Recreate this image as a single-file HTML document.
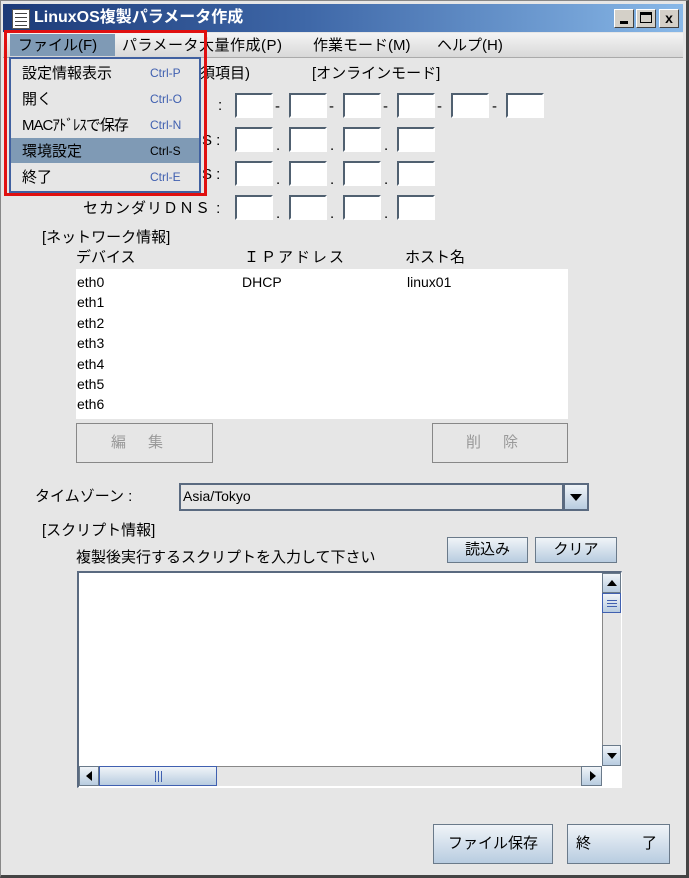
<!DOCTYPE html>
<html><head><meta charset="utf-8"><style>
*{margin:0;padding:0;box-sizing:border-box}
body{width:689px;height:878px;background:#fff;position:relative;overflow:hidden;font-family:"Liberation Sans","Noto Sans CJK JP",sans-serif;font-size:15px;color:#000}
.a{position:absolute;white-space:nowrap;line-height:1}
.win{position:absolute;left:0;top:0;width:689px;height:878px;background:#e6e6e6;border:1px solid #888;border-right:3px solid #444;border-bottom:3px solid #444}
.title{position:absolute;left:3px;top:4px;width:680px;height:28px;background:linear-gradient(90deg,#1c3a78 0%,#3f68a8 45%,#88b8e8 100%)}
.wb{position:absolute;top:5px;width:20px;height:19px;background:#d4d0c8;border:1px solid;border-color:#fff #404040 #404040 #fff}
.box{position:absolute;width:38px;height:25px;background:#fff;border:2px solid #fff;border-top-color:#506070;border-left-color:#506070}
.btn{position:absolute;border:1px solid #6a7a8a;background:linear-gradient(#f0f4f8,#b8cce0);text-align:center}
.dis{position:absolute;border:1px solid #888;background:#e6e6e6;color:#999}
</style></head><body>
<div class="win"></div>
<div class="title"></div>
<div class="a" style="left:12px;top:9px;width:18px;height:20px;background:#fff;border:1px solid #555"><div style="margin:3px 2px;height:1px;background:#444;box-shadow:0 4px #444,0 8px #444,0 12px #444"></div></div>
<div class="a" style="left:34px;top:10px;color:#fff;font-weight:bold;font-size:16px">LinuxOS複製パラメータ作成</div>
<div class="wb" style="left:614px;top:9px"><div style="position:absolute;left:5px;top:11px;width:8px;height:3px;background:#000"></div></div>
<div class="wb" style="left:636px;top:9px"><div style="position:absolute;left:3px;top:2px;width:12px;height:11px;border:1px solid #000;border-top-width:3px"></div></div>
<div class="wb" style="left:659px;top:9px;font-weight:bold;font-size:14px;text-align:center;line-height:16px">x</div>
<div class="a" style="left:3px;top:33px;width:680px;height:25px;background:linear-gradient(#f4f4f4,#d8d8d8);border-bottom:1px solid #aaa"></div>
<div class="a" style="left:10px;top:34px;width:105px;height:22px;background:#7f9ab5"></div>
<div class="a" style="left:18px;top:38px">ファイル(F)</div>
<div class="a" style="left:122px;top:38px;letter-spacing:0.5px">パラメータ大量作成(P)</div>
<div class="a" style="left:313px;top:38px">作業モード(M)</div>
<div class="a" style="left:437px;top:38px">ヘルプ(H)</div>

<div class="a" style="left:200px;top:66px">須項目)</div>
<div class="a" style="left:312px;top:66px">[オンラインモード]</div>

<div class="a" style="left:218px;top:98px">:</div>
<div class="box" style="left:235px;top:93px"></div><div class="a" style="left:275px;top:99px">-</div>
<div class="box" style="left:289px;top:93px"></div><div class="a" style="left:329px;top:99px">-</div>
<div class="box" style="left:343px;top:93px"></div><div class="a" style="left:383px;top:99px">-</div>
<div class="box" style="left:397px;top:93px"></div><div class="a" style="left:437px;top:99px">-</div>
<div class="box" style="left:451px;top:93px"></div><div class="a" style="left:492px;top:99px">-</div>
<div class="box" style="left:506px;top:93px"></div>

<div class="a" style="left:202px;top:133px">S :</div>
<div class="box" style="left:235px;top:127px"></div><div class="a" style="left:276px;top:138px">.</div>
<div class="box" style="left:289px;top:127px"></div><div class="a" style="left:330px;top:138px">.</div>
<div class="box" style="left:343px;top:127px"></div><div class="a" style="left:384px;top:138px">.</div>
<div class="box" style="left:397px;top:127px"></div>
<div class="a" style="left:202px;top:167px">S :</div>
<div class="box" style="left:235px;top:161px"></div><div class="a" style="left:276px;top:172px">.</div>
<div class="box" style="left:289px;top:161px"></div><div class="a" style="left:330px;top:172px">.</div>
<div class="box" style="left:343px;top:161px"></div><div class="a" style="left:384px;top:172px">.</div>
<div class="box" style="left:397px;top:161px"></div>
<div class="a" style="left:83px;top:201px;letter-spacing:1px">セカンダリＤＮＳ :</div>
<div class="box" style="left:235px;top:195px"></div><div class="a" style="left:276px;top:206px">.</div>
<div class="box" style="left:289px;top:195px"></div><div class="a" style="left:330px;top:206px">.</div>
<div class="box" style="left:343px;top:195px"></div><div class="a" style="left:384px;top:206px">.</div>
<div class="box" style="left:397px;top:195px"></div>

<div class="a" style="left:42px;top:230px">[ネットワーク情報]</div>
<div class="a" style="left:76px;top:250px">デバイス</div>
<div class="a" style="left:244px;top:250px;letter-spacing:2px">ＩＰアドレス</div>
<div class="a" style="left:405px;top:250px">ホスト名</div>
<div class="a" style="left:76px;top:269px;width:492px;height:150px;background:#fff"></div>
<div class="a" style="left:77px;top:272px;font-size:14px;line-height:20.4px">eth0<br>eth1<br>eth2<br>eth3<br>eth4<br>eth5<br>eth6</div>
<div class="a" style="left:242px;top:275px;font-size:14px">DHCP</div>
<div class="a" style="left:407px;top:275px;font-size:14px">linux01</div>
<div class="dis" style="left:76px;top:423px;width:137px;height:40px;line-height:38px;padding-left:34px;letter-spacing:22px">編集</div>
<div class="dis" style="left:432px;top:423px;width:136px;height:40px;line-height:38px;padding-left:33px;letter-spacing:22px">削除</div>

<div class="a" style="left:35px;top:489px">タイムゾーン :</div>
<div class="a" style="left:179px;top:483px;width:384px;height:28px;border:2px solid #5a6a80;background:#e6e6e6;border-right:1px solid #5a6a80"></div>
<div class="a" style="left:183px;top:489px;font-size:14px">Asia/Tokyo</div>
<div class="btn" style="left:563px;top:483px;width:26px;height:28px;border:2px solid #5a6a80"><div style="margin:9px auto 0;width:0;height:0;border-left:6px solid transparent;border-right:6px solid transparent;border-top:7px solid #000"></div></div>

<div class="a" style="left:42px;top:523px">[スクリプト情報]</div>
<div class="btn" style="left:447px;top:537px;width:81px;height:26px;line-height:24px">読込み</div>
<div class="btn" style="left:535px;top:537px;width:82px;height:26px;line-height:24px">クリア</div>
<div class="a" style="left:76px;top:550px">複製後実行するスクリプトを入力して下さい</div>
<div class="a" style="left:77px;top:571px;width:545px;height:217px;background:#fff;border:2px solid #5a6a80;border-right:1px solid #fff;border-bottom:1px solid #fff"></div>
<div class="a" style="left:602px;top:573px;width:19px;height:193px;background:#e6e6e6;border-left:1px solid #888"></div>
<div class="btn" style="left:602px;top:573px;width:19px;height:20px"><div style="margin:6px auto 0;width:0;height:0;border-left:5px solid transparent;border-right:5px solid transparent;border-bottom:6px solid #000"></div></div>
<div class="btn" style="left:602px;top:593px;width:19px;height:20px;border-color:#4060b0"><div style="margin:6px auto 0;width:10px;height:1px;background:#4060b0;box-shadow:0 3px #4060b0,0 6px #4060b0"></div></div>
<div class="btn" style="left:602px;top:745px;width:19px;height:21px"><div style="margin:7px auto 0;width:0;height:0;border-left:5px solid transparent;border-right:5px solid transparent;border-top:6px solid #000"></div></div>
<div class="a" style="left:79px;top:766px;width:523px;height:20px;background:#e6e6e6;border-top:1px solid #888"></div>
<div class="btn" style="left:79px;top:766px;width:20px;height:20px"><div style="margin:4px 0 0 6px;width:0;height:0;border-top:5px solid transparent;border-bottom:5px solid transparent;border-right:6px solid #000"></div></div>
<div class="btn" style="left:99px;top:766px;width:118px;height:20px;border-color:#4060b0"><div style="margin:4px auto 0;width:7px;height:11px;border-left:1px solid #4060b0;border-right:1px solid #4060b0"><div style="margin:0 auto;width:1px;height:11px;background:#4060b0"></div></div></div>
<div class="btn" style="left:581px;top:766px;width:21px;height:20px"><div style="margin:4px 0 0 8px;width:0;height:0;border-top:5px solid transparent;border-bottom:5px solid transparent;border-left:6px solid #000"></div></div>

<div class="btn" style="left:433px;top:824px;width:120px;height:40px;line-height:38px">ファイル保存</div>
<div class="btn" style="left:567px;top:824px;width:103px;height:40px;line-height:38px;text-align:left;padding-left:8px"><span>終</span><span style="position:absolute;right:12px">了</span></div>

<div class="a" style="left:9px;top:57px;width:192px;height:136px;background:#e6e6e6;border:2px solid #4060a0"></div>
<div class="a" style="left:11px;top:138px;width:188px;height:25px;background:#7f9ab5"></div>
<div class="a" style="left:22px;top:66px">設定情報表示</div>
<div class="a" style="left:22px;top:92px">開く</div>
<div class="a" style="left:22px;top:118px;letter-spacing:-1px">MACｱﾄﾞﾚｽで保存</div>
<div class="a" style="left:22px;top:144px">環境設定</div>
<div class="a" style="left:22px;top:170px">終了</div>
<div class="a" style="left:150px;top:67px;font-size:12px;color:#4060b0">Ctrl-P</div>
<div class="a" style="left:150px;top:93px;font-size:12px;color:#4060b0">Ctrl-O</div>
<div class="a" style="left:150px;top:119px;font-size:12px;color:#4060b0">Ctrl-N</div>
<div class="a" style="left:150px;top:145px;font-size:12px;color:#000">Ctrl-S</div>
<div class="a" style="left:150px;top:171px;font-size:12px;color:#4060b0">Ctrl-E</div>
<div class="a" style="left:4px;top:30px;width:203px;height:166px;border:3px solid #e01010"></div>
</body></html>
